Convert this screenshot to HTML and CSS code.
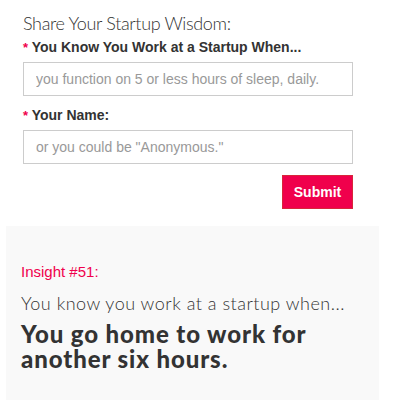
FILE: index.html
```html
<!DOCTYPE html>
<html>
<head>
<meta charset="utf-8">
<link rel="stylesheet" href="styles.css">
</head>
<body>
<div class="page">
  <form class="form">
    <h2 class="title">Share Your Startup Wisdom:</h2>
    <label class="label"><span class="req">*</span> You Know You Work at a Startup When...</label>
    <input class="field" type="text" placeholder="you function on 5 or less hours of sleep, daily.">
    <label class="label label-name"><span class="req">*</span> Your Name:</label>
    <input class="field" type="text" placeholder="or you could be &quot;Anonymous.&quot;">
    <div class="actions"><button class="submit" type="button">Submit</button></div>
  </form>
  <section class="insight">
    <div class="num">Insight #51:</div>
    <div class="intro">You know you work at a startup when...</div>
    <div class="quote">You go home to work for another six hours.</div>
  </section>
</div>
</body>
</html>
```
FILE: styles.css
```css
html, body { margin: 0; padding: 0; background: #fff; }
.page { width: 400px; height: 400px; overflow: hidden; }
.form { padding: 11px 0 0 23px; width: 330px; font-family: "Liberation Sans", Arial, sans-serif; }
.title {
  margin: 0;
  font-family: Lato, sans-serif;
  font-weight: 300;
  font-size: 18px;
  line-height: 24px;
  color: #333;
  letter-spacing: -0.35px;
}
.label {
  display: block;
  margin-top: 3px;
  font-weight: bold;
  font-size: 14px;
  line-height: 18px;
  color: #333;
}
.label-name { margin-top: 10px; }
.req { color: #f0004c; font-size: 13px; }
.field {
  display: block;
  box-sizing: border-box;
  width: 330px;
  height: 34px;
  margin-top: 5px;
  padding: 0 12px;
  border: 1px solid #ccc;
  border-radius: 0;
  font-family: "Liberation Sans", Arial, sans-serif;
  font-size: 14px;
  color: #333;
  outline: none;
}
.field::placeholder { color: #999; }
.actions { display: flex; justify-content: flex-end; margin-top: 11px; }
.submit {
  box-sizing: border-box;
  width: 71px;
  height: 34px;
  background: #f0004c;
  border: 1px solid #d8263a;
  color: #fff;
  font-family: "Liberation Sans", Arial, sans-serif;
  font-weight: bold;
  font-size: 14px;
  padding: 0;
}
.insight {
  margin: 17px 21px 0 6px;
  background: #f9f9f9;
  height: 200px;
  padding: 37px 15px 0;
  box-sizing: border-box;
}
.num {
  font-family: "Liberation Sans", Arial, sans-serif;
  font-size: 15px;
  line-height: 18px;
  color: #f0004c;
}
.intro {
  margin-top: 11px;
  font-family: Lato, sans-serif;
  font-weight: 300;
  font-size: 18px;
  line-height: 22px;
  color: #333;
  letter-spacing: 0.5px;
}
.quote {
  margin-top: 7px;
  font-family: Lato, sans-serif;
  font-weight: 900;
  font-size: 24px;
  line-height: 25px;
  color: #333;
  letter-spacing: 0.9px;
  width: 320px;
}
```
